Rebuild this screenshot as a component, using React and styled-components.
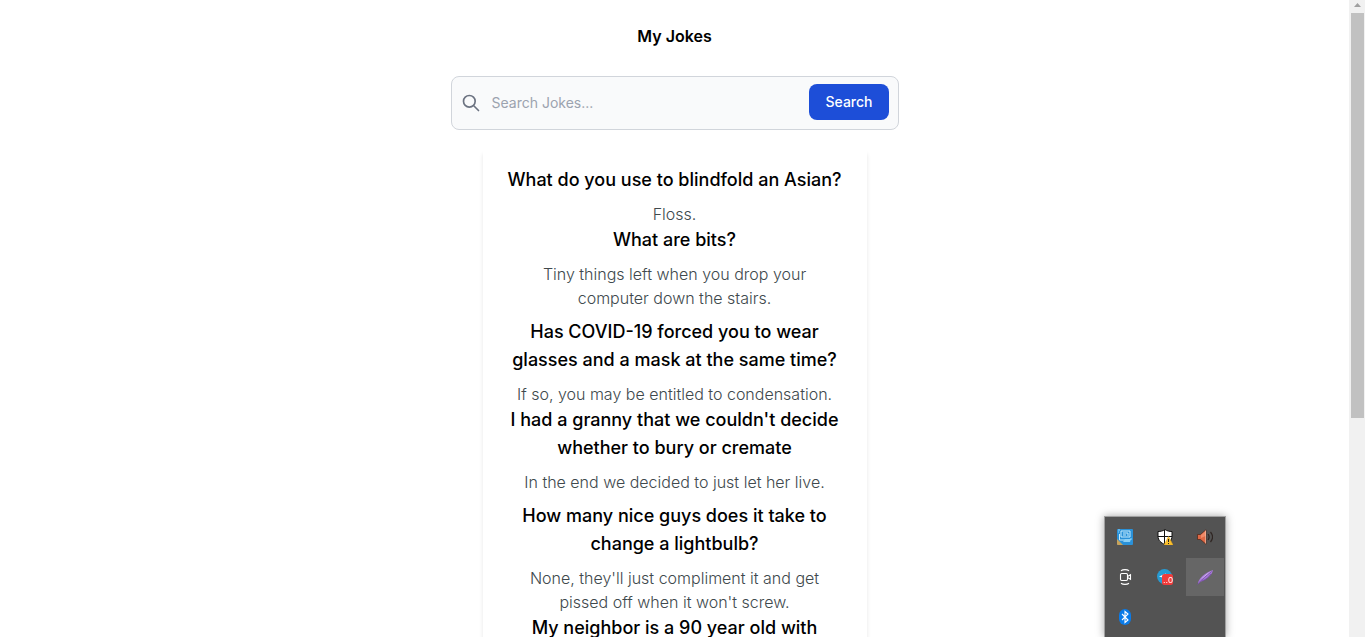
import React from "react";
import styled, { createGlobalStyle } from "styled-components";

const GlobalStyle = createGlobalStyle`
  *, *::before, *::after { box-sizing: border-box; }
  body {
    margin: 0;
    background: #fff;
    color: #000;
    font-family: Inter, "Liberation Sans", sans-serif;
    font-size: 16px;
    line-height: 24px;
  }
  h1, h2, p { margin: 0; }
`;

const Viewport = styled.div`
  display: flex;
  height: 100vh;
  overflow: hidden;
`;

const Page = styled.main`
  flex: 1;
  min-width: 0;
  display: flex;
  flex-direction: column;
  align-items: center;
  padding-top: 24px;
`;

const PageTitle = styled.h1`
  font-size: 16px;
  line-height: 24px;
  font-weight: 600;
`;

const SearchForm = styled.form`
  display: flex;
  align-items: center;
  flex-shrink: 0;
  width: 100%;
  max-width: 448px;
  height: 54px;
  margin-top: 28px;
  padding: 0 9px;
  border: 1px solid #d1d5db;
  border-radius: 8px;
  background: #f9fafb;
  svg { flex: none; }
`;

const SearchInput = styled.input`
  flex: 1;
  min-width: 0;
  height: 100%;
  padding: 0 11px 2px;
  border: 0;
  outline: 0;
  background: transparent;
  font: 400 14px/20px Inter, "Liberation Sans", sans-serif;
  color: #111827;
  &::placeholder { color: #9ca3af; opacity: 1; }
`;

const SearchButton = styled.button`
  height: 36px;
  margin-bottom: 2px;
  padding: 0 16px;
  border: 0;
  border-radius: 8px;
  background: #1d4ed8;
  color: #fff;
  font: 500 14px/20px Inter, "Liberation Sans", sans-serif;
`;

const Card = styled.section`
  flex-shrink: 0;
  width: 100%;
  max-width: 384px;
  margin-top: 20px;
  padding: 8px 24px;
  background: #fff;
  box-shadow: 0 4px 4px rgba(0, 0, 0, 0.1);
  text-align: center;
`;

const JokeGroup = styled.div`
  padding-top: 8px;
`;

const JokeTitle = styled.h2`
  margin-bottom: 8px;
  font-size: 18px;
  line-height: 28px;
  font-weight: 500;
`;

const JokeText = styled.p`
  font-weight: 300;
  color: #40494d;
`;

const Scrollbar = styled.div`
  flex: none;
  width: 16px;
  background: #f1f1f1;
  display: flex;
  flex-direction: column;
  align-items: center;
  padding-left: 1px;
  svg { display: block; flex: none; }
`;

const Thumb = styled.div`
  width: 13px;
  height: calc(65% - 9px);
  background: #c1c1c1;
`;

const Tray = styled.aside`
  position: fixed;
  right: 139px;
  bottom: 0;
  display: grid;
  grid-template-columns: repeat(3, 38px);
  grid-auto-rows: 38px;
  gap: 2px;
  padding: 1px;
  border: 1px solid #a0a0a0;
  border-bottom: 0;
  background: #535353;
  box-shadow: 0 0 8px rgba(0, 0, 0, 0.35);
`;

const TrayButton = styled.button`
  display: grid;
  place-items: center;
  padding: 0;
  border: 0;
  background: ${(p) => (p.$active ? "#666" : "transparent")};
`;

const groups = [
  [
    ["What do you use to blindfold an Asian?", "Floss."],
    ["What are bits?", "Tiny things left when you drop your computer down the stairs."],
  ],
  [
    ["Has COVID-19 forced you to wear glasses and a mask at the same time?", "If so, you may be entitled to condensation."],
    ["I had a granny that we couldn't decide whether to bury or cremate", "In the end we decided to just let her live."],
  ],
  [
    ["How many nice guys does it take to change a lightbulb?", "None, they'll just compliment it and get pissed off when it won't screw."],
    ["My neighbor is a 90 year old with", ""],
  ],
];

const SearchIcon = () => (
  <svg width="20" height="20" viewBox="0 0 24 24" fill="none" stroke="#6b7280" strokeWidth="2" strokeLinecap="round" strokeLinejoin="round" aria-hidden="true">
    <path d="M21 21l-6-6m2-5a7 7 0 11-14 0 7 7 0 0114 0z" />
  </svg>
);

const trayItems = [
  {
    label: "Graphics settings",
    art: (
      <>
        <rect width="16" height="16" rx="1" fill="#2a91d8" />
        <path d="M0 10l6 6H1a1 1 0 0 1-1-1z" fill="#c9a35a" />
        <path d="M4 2h9v6H4zM2.500 5v6h9M6 4h5M6 6h3M11 4v3" fill="none" stroke="#c4ecff" />
        <path d="M6 13l2-3h6l-1 3z" fill="#8bd0f5" />
        <path d="M1 1h2M1 3h1M13 10h2" stroke="#8fd5fa" />
      </>
    ),
  },
  {
    label: "Windows Security",
    art: (
      <>
        <path d="M8 .5C6 2 3.500 2.500 1 2.500V7c0 4.500 3 7 7 8.500 4-1.500 7-4 7-8.500V2.500C12.500 2.500 10 2 8 .5z" fill="#fff" stroke="#111" />
        <path d="M7.500 1v14M1 7.500h14" stroke="#111" />
        <path d="M11.500 7.500L16 16H7z" fill="#fbc02d" stroke="#e0a51c" strokeWidth=".5" />
        <path d="M11.500 10v3M11.500 14v1" stroke="#222" />
      </>
    ),
  },
  {
    label: "Volume",
    art: (
      <>
        <path d="M.5 5.500h3L9 .8v14.400L3.500 10.500h-3z" fill="#df6844" stroke="#4b2419" strokeWidth=".7" />
        <path d="M4 6l4.500-4v5L4 9z" fill="#f08a68" />
        <path d="M8.500 1.500v13" stroke="#ffc1a8" strokeWidth=".7" />
        <path d="M11 5c1.500 2 1.500 4 0 6M13.500 3c2.500 3 2.500 7 0 10" fill="none" stroke="#2f2522" strokeWidth="1.200" />
      </>
    ),
  },
  {
    label: "Meet Now",
    art: (
      <g fill="none" stroke="#fff" strokeWidth="1.100">
        <rect x="3.500" y="4.500" width="7" height="7" rx="1.200" />
        <path d="M10.500 7.500l3-1.800v4.600l-3-1.800M4 1.800C6 .2 10 .2 12 1.800M4 14.200c2 1.600 6 1.600 8 0" />
      </g>
    ),
  },
  {
    label: "Telegram",
    art: (
      <>
        <circle cx="7.500" cy="7.500" r="7.500" fill="#279bd3" />
        <path d="M2 7.500l7-3v5z" fill="#fff" />
        <rect x="5" y="5" width="11" height="11" rx="2.500" fill="#f03c3c" />
        <text x="6" y="14" fill="#fff" fontFamily="Liberation Sans, sans-serif" fontSize="9">..0</text>
      </>
    ),
  },
  {
    label: "Feather",
    active: true,
    art: (
      <>
        <path d="M1 15C1 10 7 4 16 1c-.5 4-5 9-12 11.500z" fill="#a477d5" />
        <path d="M3 11.500C6 7.500 10 4 14.500 2 11 6 7 8.500 3 11.500z" fill="#cfb2ef" />
        <path d="M.5 15.500C5 10 9 7 14.500 2.500M5 12c4-1.500 7-4 9-7" fill="none" stroke="#7446a6" strokeWidth=".8" />
      </>
    ),
  },
  {
    label: "Bluetooth",
    art: (
      <>
        <rect x="2" width="12" height="16" rx="6" fill="#0a7be8" />
        <path d="M5 5l6 6-3 2.500v-11L11 5l-6 6" fill="none" stroke="#fff" strokeWidth="1.100" />
      </>
    ),
  },
];

export default function App() {
  return (
    <>
      <GlobalStyle />
      <Viewport>
        <Page>
          <PageTitle>My Jokes</PageTitle>
          <SearchForm role="search" onSubmit={(e) => e.preventDefault()}>
            <SearchIcon />
            <SearchInput type="search" aria-label="Search jokes" placeholder="Search Jokes..." />
            <SearchButton type="submit">Search</SearchButton>
          </SearchForm>
          <Card>
            {groups.map((group) => (
              <JokeGroup key={group[0][0]}>
                {group.map(([title, text]) => (
                  <article key={title}>
                    <JokeTitle>{title}</JokeTitle>
                    {text && <JokeText>{text}</JokeText>}
                  </article>
                ))}
              </JokeGroup>
            ))}
          </Card>
        </Page>
        <Scrollbar aria-hidden="true">
          <svg width="13" height="13" viewBox="0 0 13 13">
            <path d="M3 7l3.500-4L10 7z" fill="#a0a0a0" />
          </svg>
          <Thumb />
        </Scrollbar>
      </Viewport>
      <Tray aria-label="Notification area">
        {trayItems.map((item) => (
          <TrayButton key={item.label} type="button" aria-label={item.label} $active={item.active}>
            <svg width="16" height="16" viewBox="0 0 16 16" aria-hidden="true">{item.art}</svg>
          </TrayButton>
        ))}
      </Tray>
    </>
  );
}
